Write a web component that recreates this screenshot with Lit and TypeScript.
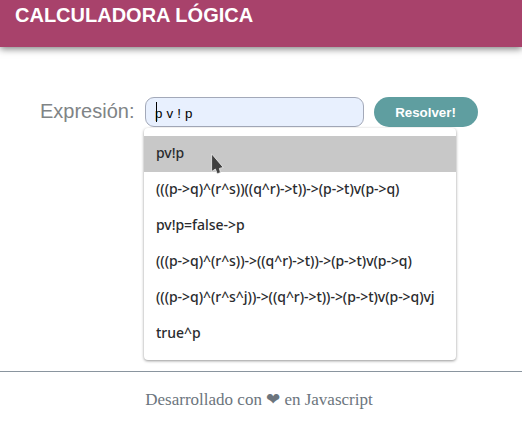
import { LitElement, html, css } from "lit";
import { customElement, state } from "lit/decorators.js";
import { classMap } from "lit/directives/class-map.js";

@customElement("app-root")
export class AppRoot extends LitElement {
  @state() private selected = 0;

  private suggestions = [
    "pv!p",
    "(((p->q)^(r^s))((q^r)->t))->(p->t)v(p->q)",
    "pv!p=false->p",
    "(((p->q)^(r^s))->((q^r)->t))->(p->t)v(p->q)",
    "(((p->q)^(r^s^j))->((q^r)->t))->(p->t)v(p->q)vj",
    "true^p",
  ];

  static styles = css`
    :host {
      display: flex;
      flex-direction: column;
      height: 424px;
      overflow: hidden;
      background: #fff;
      font-family: "Liberation Sans", Arial, sans-serif;
    }
    header {
      flex: none;
      height: 47px;
      box-sizing: border-box;
      padding: 3px 15px 0;
      background: #a8426b;
      box-shadow: 0 2px 7px rgba(0, 0, 0, 0.5);
    }
    h1 {
      margin: 0;
      font-size: 20px;
      line-height: 24px;
      color: #fff;
      white-space: nowrap;
    }
    main {
      flex: none;
      height: 324px;
      box-sizing: border-box;
      padding: 50px 0 0 40px;
    }
    .row {
      display: flex;
      height: 30px;
    }
    .label {
      width: 105px;
      font-size: 20px;
      line-height: 29px;
      color: #808486;
      white-space: nowrap;
    }
    .field {
      position: relative;
      width: 219px;
      height: 30px;
      box-sizing: border-box;
      padding: 0 9px;
      border: 1px solid #a3a9b9;
      border-radius: 9px;
      background: #e8f0fe;
      font: 13.33px/32px "Liberation Sans", Arial, sans-serif;
      word-spacing: 0.4px;
      color: #000;
      white-space: nowrap;
    }
    .caret {
      position: absolute;
      left: 10px;
      top: 4px;
      width: 1px;
      height: 20px;
      background: #000;
    }
    button {
      width: 104px;
      height: 30px;
      margin-left: 10px;
      padding: 0 1px 0 0;
      border: 0;
      border-radius: 15px;
      background: #5f9ea0;
      color: #fff;
      font: bold 13.33px "Liberation Sans", Arial, sans-serif;
    }
    .menu {
      position: absolute;
      left: -2px;
      top: 30px;
      width: 312px;
      height: 232px;
      box-sizing: border-box;
      padding: 8px 0;
      border-radius: 4px;
      background: #fff;
      box-shadow: 0 1px 3px rgba(0, 0, 0, 0.42);
      word-spacing: 0;
    }
    .option {
      height: 36px;
      padding-left: 12px;
      font: 500 14px/33px "Noto Sans", "Open Sans", sans-serif;
      letter-spacing: -0.045px;
      color: #2a2b2e;
      white-space: nowrap;
    }
    .option.selected {
      background: #c8c8c8;
    }
    .pointer {
      position: absolute;
      left: 67px;
      top: 25px;
      width: 14px;
      height: 22px;
    }
    footer {
      flex: none;
      border-top: 1px solid #8a959f;
      padding: 17px 0 0 145.3px;
      font: 17px/22px "Liberation Serif", "Times New Roman", serif;
      color: #6c757d;
      white-space: nowrap;
    }
  `;

  render() {
    return html`
      <header><h1>CALCULADORA LÓGICA</h1></header>
      <main>
        <div class="row">
          <span class="label">Expresión:</span>
          <div class="field">
            p v ! p<i class="caret"></i>
            <div class="menu" role="listbox">
              ${this.suggestions.map(
                (text, i) => html`<div
                  role="option"
                  class=${classMap({ option: true, selected: i === this.selected })}
                  @mouseenter=${() => (this.selected = i)}
                >${text}</div>`
              )}
              <svg class="pointer" viewBox="0 0 14 22">
                <path d="M0.6 0.8 L0.6 18.6 L4.4 16 L6.2 20.8 L9.4 19.6 L8.4 15.4 L12.2 14.4 Z"
                  fill="#404040" stroke="#eeeeee" stroke-width="0.8" />
              </svg>
            </div>
          </div>
          <button>Resolver!</button>
        </div>
      </main>
      <footer>Desarrollado con ❤ en Javascript</footer>
    `;
  }
}
